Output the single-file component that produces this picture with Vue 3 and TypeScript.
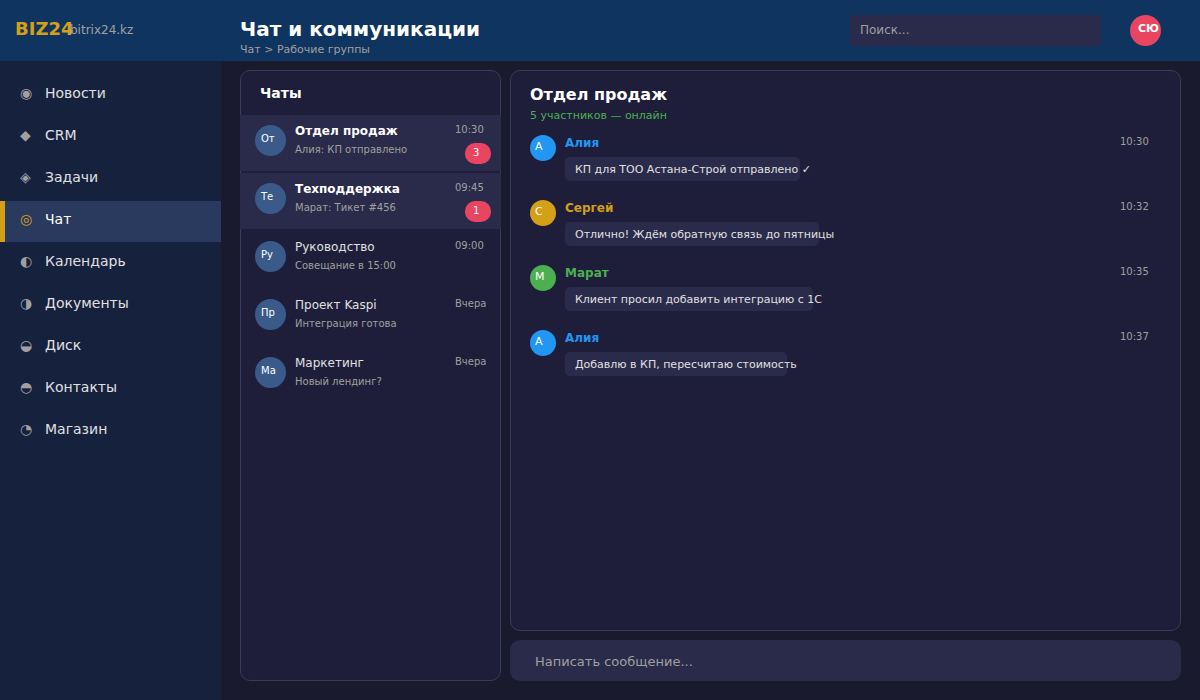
<script setup lang="ts">
import { ref } from 'vue'

interface NavItem {
  icon: string
  label: string
}

interface Chat {
  initials: string
  name: string
  preview: string
  time: string
  unread: number
}

interface Message {
  author: string
  tone: 'blue' | 'gold' | 'green'
  text: string
  time: string
}

const navItems: NavItem[] = [
  { icon: '◉', label: 'Новости' },
  { icon: '◆', label: 'CRM' },
  { icon: '◈', label: 'Задачи' },
  { icon: '◎', label: 'Чат' },
  { icon: '◐', label: 'Календарь' },
  { icon: '◑', label: 'Документы' },
  { icon: '◒', label: 'Диск' },
  { icon: '◓', label: 'Контакты' },
  { icon: '◔', label: 'Магазин' },
]

const chats: Chat[] = [
  { initials: 'От', name: 'Отдел продаж', preview: 'Алия: КП отправлено', time: '10:30', unread: 3 },
  { initials: 'Те', name: 'Техподдержка', preview: 'Марат: Тикет #456', time: '09:45', unread: 1 },
  { initials: 'Ру', name: 'Руководство', preview: 'Совещание в 15:00', time: '09:00', unread: 0 },
  { initials: 'Пр', name: 'Проект Kaspi', preview: 'Интеграция готова', time: 'Вчера', unread: 0 },
  { initials: 'Ма', name: 'Маркетинг', preview: 'Новый лендинг?', time: 'Вчера', unread: 0 },
]

const messages: Message[] = [
  { author: 'Алия', tone: 'blue', text: 'КП для ТОО Астана-Строй отправлено ✓', time: '10:30' },
  { author: 'Сергей', tone: 'gold', text: 'Отлично! Ждём обратную связь до пятницы', time: '10:32' },
  { author: 'Марат', tone: 'green', text: 'Клиент просил добавить интеграцию с 1С', time: '10:35' },
  { author: 'Алия', tone: 'blue', text: 'Добавлю в КП, пересчитаю стоимость', time: '10:37' },
]

const activeNav = ref('Чат')
const query = ref('')
const draft = ref('')

// Bubble width grows with the number of characters in the message.
const bubbleWidth = (text: string): string => `${Math.floor(text.length * 6.5) + 1}px`
</script>

<template>
  <div class="app">
    <header class="topbar">
      <div class="brand">
        <span class="brand-name">BIZ24</span>
        <span class="brand-domain">bitrix24.kz</span>
      </div>
      <div class="heading">
        <h1>Чат и коммуникации</h1>
        <p>Чат &gt; Рабочие группы</p>
      </div>
      <input v-model="query" class="search" type="search" placeholder="Поиск..." aria-label="Поиск" />
      <button class="profile" type="button">СЮ</button>
    </header>

    <nav class="sidebar">
      <a
        v-for="item in navItems"
        :key="item.label"
        href="#"
        class="nav-item"
        :class="{ active: item.label === activeNav }"
        @click.prevent="activeNav = item.label"
      >
        <span class="nav-icon">{{ item.icon }}</span>
        <span>{{ item.label }}</span>
      </a>
    </nav>

    <main class="content">
      <section class="panel chats">
        <h2>Чаты</h2>
        <button
          v-for="chat in chats"
          :key="chat.name"
          type="button"
          class="chat"
          :class="{ unread: chat.unread > 0 }"
        >
          <span class="avatar">{{ chat.initials }}</span>
          <span class="chat-body">
            <span class="chat-name">{{ chat.name }}</span>
            <span class="chat-preview">{{ chat.preview }}</span>
          </span>
          <span class="chat-side">
            <span class="time">{{ chat.time }}</span>
            <span v-if="chat.unread" class="badge">{{ chat.unread }}</span>
          </span>
        </button>
      </section>

      <div class="conversation">
        <section class="panel thread">
          <h2>Отдел продаж</h2>
          <p class="members">5 участников — онлайн</p>
          <article v-for="message in messages" :key="message.time" class="message" :class="message.tone">
            <span class="message-avatar">{{ message.author.charAt(0) }}</span>
            <div class="message-body">
              <h3>{{ message.author }}</h3>
              <p class="bubble" :style="{ width: bubbleWidth(message.text) }">{{ message.text }}</p>
            </div>
            <time class="time">{{ message.time }}</time>
          </article>
        </section>
        <input
          v-model="draft"
          class="composer"
          type="text"
          placeholder="Написать сообщение..."
          aria-label="Написать сообщение"
        />
      </div>
    </main>
  </div>
</template>

<style>
body {
  margin: 0;
  background: #1a1a2e;
}
</style>

<style scoped>
.app,
.app * {
  box-sizing: border-box;
}

.app {
  display: grid;
  grid-template-columns: 221px minmax(0, 1fr);
  grid-template-rows: 61px minmax(0, 1fr);
  min-height: 100vh;
  background: #1a1a2e;
  color: #e0e0e0;
  font-family: 'DejaVu Sans', sans-serif;
}

h1,
h2,
h3,
p {
  margin: 0;
}

button,
input {
  margin: 0;
  border: 0;
  font-family: inherit;
  color: inherit;
}

button {
  text-align: left;
  cursor: pointer;
}

.topbar {
  grid-column: 1 / -1;
  display: flex;
  align-items: flex-start;
  padding: 15px 39px 0 15px;
  background: #0f3460;
}

.brand {
  display: flex;
  width: 225px;
  padding-top: 4px;
}

.brand-name {
  width: 55px;
  color: #d4a017;
  font-size: 18px;
  font-weight: 700;
  line-height: 20px;
}

.brand-domain {
  color: #a0a0a0;
  font-size: 12px;
  line-height: 22px;
}

.heading {
  flex: 1;
}

h1 {
  color: #ffffff;
  font-size: 20px;
  line-height: 28px;
}

.heading p {
  color: #a0a0a0;
  font-size: 11px;
  line-height: 14px;
}

.search {
  width: 251px;
  height: 31px;
  padding: 0 10px 2px;
  border-radius: 5px;
  background: #2a2a4a;
  font-size: 12px;
}

.search::placeholder,
.composer::placeholder {
  color: #a0a0a0;
  opacity: 1;
}

.profile {
  width: 31px;
  height: 31px;
  margin-left: 29px;
  padding: 0 0 4px 8px;
  border-radius: 50%;
  background: #e94560;
  color: #ffffff;
  font-size: 11px;
  font-weight: 700;
  white-space: nowrap;
}

.sidebar {
  display: flex;
  flex-direction: column;
  gap: 1px;
  padding-top: 14px;
  background: #16213e;
}

.nav-item {
  display: flex;
  height: 41px;
  padding: 10px 0 0 15px;
  border-left: 5px solid transparent;
  color: #e0e0e0;
  font-size: 14px;
  line-height: 16px;
  text-decoration: none;
}

.nav-icon {
  width: 25px;
  color: #a0a0a0;
}

.nav-item.active {
  border-left-color: #d4a017;
  background: #2a3a5e;
  color: #ffffff;
}

.nav-item.active .nav-icon {
  color: #d4a017;
}

.content {
  display: grid;
  grid-template-columns: 261px minmax(0, 1fr);
  gap: 9px;
  padding: 9px 19px 19px;
}

.panel {
  border: 1px solid #3a3a5a;
  border-radius: 10px;
  background: #1e1e3a;
}

.chats {
  display: flex;
  flex-direction: column;
  gap: 2px;
}

.chats h2 {
  height: 42px;
  padding: 14px 19px 0;
  color: #ffffff;
  font-size: 14px;
  line-height: 16px;
}

.chat {
  display: flex;
  height: 56px;
  margin: 0 -1px;
  padding: 10px 0 0 15px;
  background: transparent;
}

.chat.unread {
  background: #2a2a4a;
}

.avatar {
  width: 31px;
  height: 31px;
  padding: 8px 0 0 6px;
  border-radius: 50%;
  background: #3a5a8a;
  color: #ffffff;
  font-size: 10px;
  line-height: 12px;
}

.chat-body {
  display: flex;
  flex: 1;
  flex-direction: column;
  gap: 6px;
  padding-left: 9px;
}

.chat-name {
  font-size: 12px;
  line-height: 13px;
}

.unread .chat-name {
  color: #ffffff;
  font-weight: 700;
}

.chat-preview,
.time {
  color: #a0a0a0;
  font-size: 10px;
  line-height: 12px;
}

.chat-side {
  display: flex;
  flex-direction: column;
  gap: 8px;
  width: 46px;
}

.chat-side .time {
  line-height: 10px;
}

.badge {
  width: 26px;
  height: 21px;
  margin-left: 10px;
  padding: 4px 0 0 8px;
  border-radius: 10px;
  background: #e94560;
  color: #ffffff;
  font-size: 10px;
  line-height: 12px;
}

.conversation {
  display: flex;
  flex-direction: column;
  gap: 9px;
}

.thread {
  flex: 1;
  padding: 14px 19px;
}

.thread h2 {
  color: #ffffff;
  font-size: 16px;
  line-height: 20px;
}

.members {
  padding: 4px 0 13px;
  color: #4caf50;
  font-size: 11px;
  line-height: 13px;
}

.message {
  display: flex;
  height: 65px;
}

.message-avatar {
  width: 26px;
  height: 26px;
  padding: 6px 0 0 5px;
  border-radius: 50%;
  background: currentColor;
  font-size: 11px;
  line-height: 12px;
}

.message-avatar::first-letter {
  color: #ffffff;
}

.message-body {
  flex: 1;
  padding-left: 9px;
}

h3 {
  font-size: 12px;
  line-height: 17px;
}

.bubble {
  height: 24px;
  margin-top: 5px;
  padding: 6px 0 0 10px;
  border-radius: 5px;
  background: #2a2a4a;
  color: #e0e0e0;
  font-size: 11px;
  line-height: 13px;
  white-space: nowrap;
}

.message .time {
  width: 41px;
  line-height: 14px;
}

.blue {
  color: #2196f3;
}

.gold {
  color: #d4a017;
}

.green {
  color: #4caf50;
}

.composer {
  width: 100%;
  height: 41px;
  padding: 2px 25px 0;
  border-radius: 10px;
  background: #2a2a4a;
  font-size: 13px;
}
</style>
